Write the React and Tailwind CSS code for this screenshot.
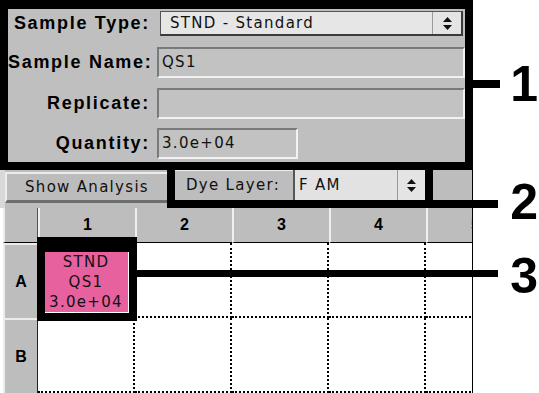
import React from 'react'

const label = "font-['Liberation_Sans',Arial,sans-serif] font-bold text-[18px] tracking-[1.7px] text-black"
const value = "font-['DejaVu_Sans',sans-serif] text-[15px] tracking-[1.3px] text-[#111]"
const callout = "absolute right-[1px] w-[29px] leading-none text-right font-['Liberation_Sans',Arial,sans-serif] font-bold text-[50px] text-black"

function Spin({ className }) {
  return (
    <div className={"flex items-center justify-center bg-[#e4e4e4] border-l border-[#9a9a9a] " + className}>
      <svg width="9" height="13" viewBox="0 0 9 13">
        <path d="M4.5 0 L9 5 L0 5 Z" fill="#111" />
        <path d="M0 8 L9 8 L4.5 13 Z" fill="#111" />
      </svg>
    </div>
  )
}

function Field({ w, children }) {
  return (
    <div className={"h-[31px] flex items-center pl-[3px] bg-[#c2c2c2] border-t-2 border-l-2 border-[#7a7a7a] border-b-2 border-r-2 border-b-[#f2f2f2] border-r-[#f2f2f2] " + w}>
      <span className={value}>{children}</span>
    </div>
  )
}

function Row({ text, mt, children }) {
  return (
    <div className={"flex items-center " + mt}>
      <div className={"w-[142px] text-right whitespace-nowrap " + label}>{text}</div>
      {children}
    </div>
  )
}

export default function App() {
  const cols = ['1', '2', '3', '4', '5']
  return (
    <div className="relative w-[539px] h-[393px] bg-white overflow-hidden">
      {/* Sample panel */}
      <div className="w-[473px] h-[170px] border-black border-x-[8px] border-t-[9px] border-b-[8px] bg-[#bfbfbf] flex flex-col">
        <Row text="Sample Type:" mt="mt-[1px]">
          <div className="ml-[10px] w-[303px] h-[25px] flex bg-[#e6e6e6] border-l border-t border-[#555] border-r-2 border-b-2 border-r-[#3a3a3a] border-b-[#3a3a3a]">
            <div className="flex-1 flex items-center pl-[9px]">
              <span className={value}>STND - Standard</span>
            </div>
            <Spin className="w-[29px]" />
          </div>
        </Row>
        <Row text="Sample Name:" mt="mt-[10px]">
          <div className="ml-[7px]"><Field w="w-[308px]">QS1</Field></div>
        </Row>
        <Row text="Replicate:" mt="mt-[10px]">
          <div className="ml-[7px]"><Field w="w-[308px]"></Field></div>
        </Row>
        <Row text="Quantity:" mt="mt-[9px]">
          <div className="ml-[7px]"><Field w="w-[141px]">3.0e+04</Field></div>
        </Row>
      </div>

      {/* Toolbar */}
      <div className="w-[473px] h-[38px] flex bg-[#bdbdbd] border-r border-black">
        <div className="w-[5px] bg-[#d8d8d8]" />
        <div className="mt-[2px] w-[163px] h-[31px] flex items-center justify-center bg-[#bcbcbc] border-t-2 border-l-2 border-[#ececec] border-b-[3px] border-r border-b-[#6e6e6e] border-r-[#8a8a8a]">
          <span className={value}>Show Analysis</span>
        </div>
        <div className="-ml-[1px] w-[266px] h-[38px] border-black border-x-[8px] border-b-[8px] flex bg-[#bdbdbd]">
          <div className="w-[118px] flex items-center pl-[11px] border-t border-[#ececec]">
            <span className={value}>Dye Layer:</span>
          </div>
          <div className="flex-1 flex bg-[#e2e2e2] border-l-2 border-[#555]">
            <div className="flex-1 flex items-center pl-[4px]">
              <span className={value}>F AM</span>
            </div>
            <Spin className="w-[28px]" />
          </div>
        </div>
      </div>

      {/* Plate grid */}
      <div className="w-[473px] h-[185px] overflow-hidden border-r border-black bg-white pl-[3px]">
        <div className="grid grid-cols-[35px_97px_97px_97px_97px_97px] grid-rows-[35px_75px_75px] w-[518px]">
          <div className="bg-[#bdbdbd] border-l-2 border-[#ececec] border-b border-b-black border-r border-r-[#555]" />
          {cols.map(c => (
            <div key={c} className="bg-[#bdbdbd] border-l-2 border-[#efefef] border-b border-b-black flex items-center justify-center">
              <span className="font-['Liberation_Sans',Arial,sans-serif] font-bold text-[16px] text-black">{c}</span>
            </div>
          ))}
          {['A', 'B'].map(r => (
            <React.Fragment key={r}>
              <div className="bg-[#bdbdbd] border-l-2 border-[#ececec] border-t-2 border-t-[#ececec] border-r border-r-[#222] flex items-center justify-center">
                <span className="font-['Liberation_Sans',Arial,sans-serif] font-bold text-[16px] text-black">{r}</span>
              </div>
              {cols.map(c => (
                <div key={c} className="border-r-2 border-b-2 border-dotted border-black">
                  {r === 'A' && c === '1' && (
                    <div className="ml-[6px] mt-[9px] w-[84px] h-[60px] bg-[#e8619f] flex flex-col items-center justify-center leading-[20px]">
                      <span className={value}>STND</span>
                      <span className={value}>QS1</span>
                      <span className={value}>3.0e+04</span>
                    </div>
                  )}
                </div>
              ))}
            </React.Fragment>
          ))}
        </div>
      </div>

      {/* Callouts */}
      <div className="absolute left-[37px] top-[237px] w-[100px] h-[84px] border-[8px] border-t-[15px] border-black" />
      <div className="absolute left-[473px] top-[80px] w-[27px] h-[8px] bg-black" />
      <div className="absolute left-[425px] top-[200px] w-[73px] h-[8px] bg-black" />
      <div className="absolute left-[137px] top-[270px] w-[361px] h-[7px] bg-black" />
      <div className={callout + " top-[59px]"}>1</div>
      <div className={callout + " top-[177px]"}>2</div>
      <div className={callout + " top-[251px]"}>3</div>
    </div>
  )
}
